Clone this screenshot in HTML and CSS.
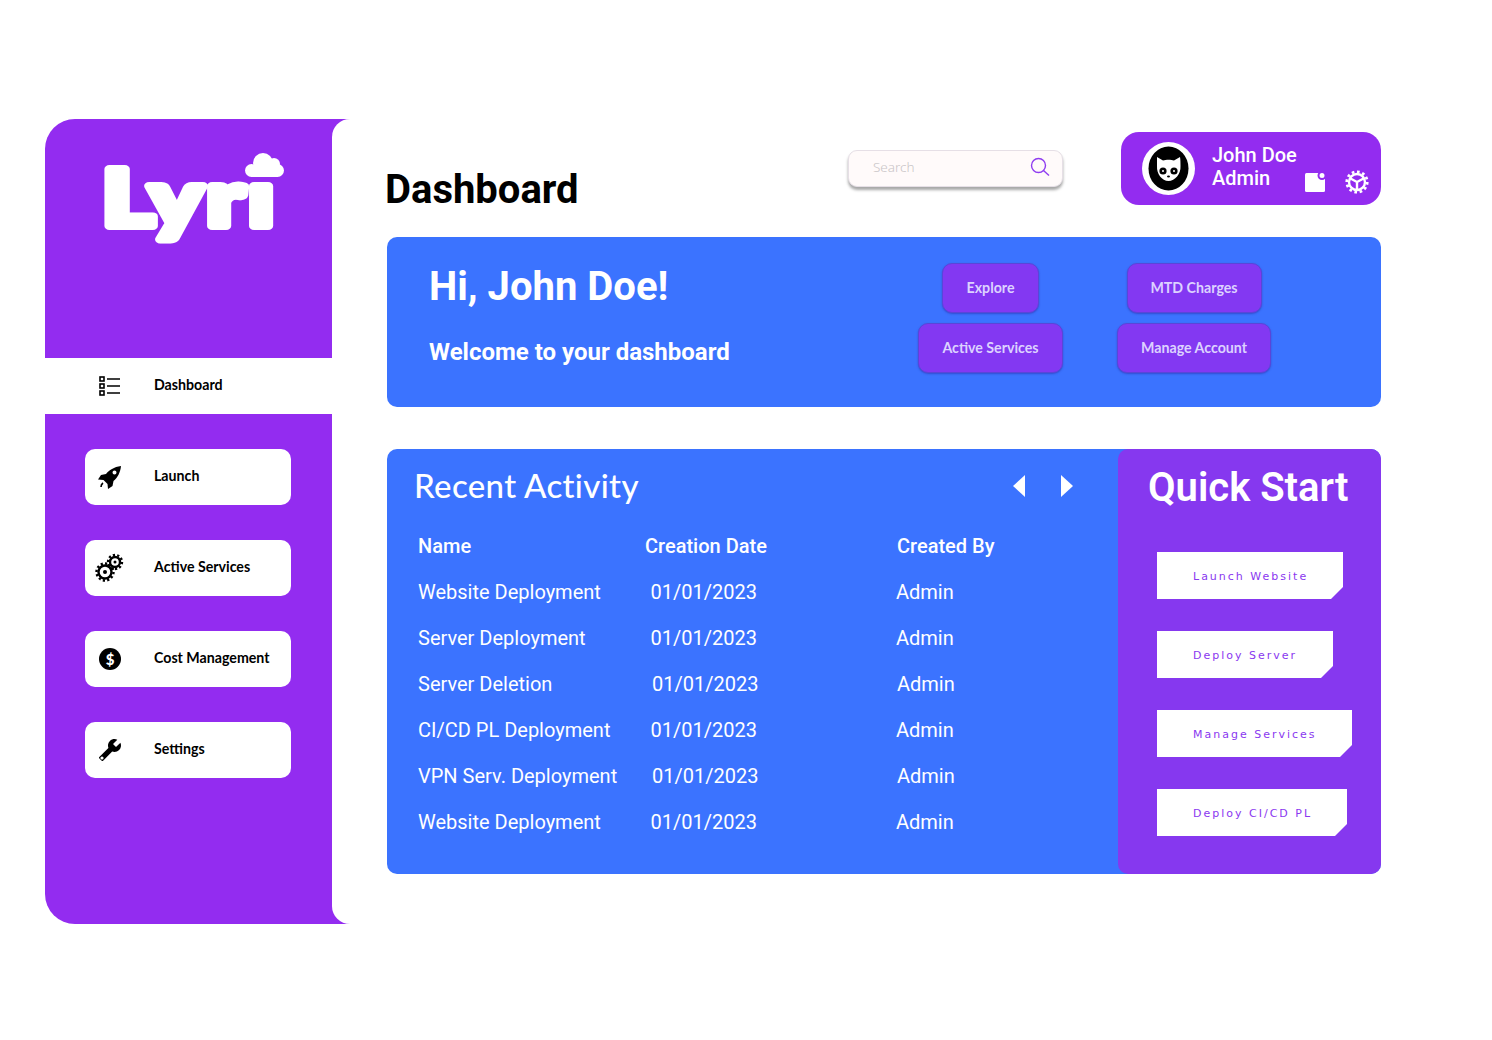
FILE: index.html
```html
<!DOCTYPE html>
<html lang="en">

<head>
    <meta charset="UTF-8">
    <meta name="viewport" content="width=device-width, initial-scale=1.0">
    <title>Lyri Dashboard</title>

    <link rel="stylesheet" href="styles.css">

</head>

<body>

    <div class="app">

        <!-- Barra lateral -->
        <aside class="sidebar">
            <div class="brand">
                <svg class="logo" width="190" height="95" viewBox="0 0 190 95">
                    <text class="logo-text" x="2" y="76" textLength="176" lengthAdjust="spacingAndGlyphs">Lyrı</text>
                    <circle class="logo-cloud" cx="151.500" cy="20.500" r="6.500"/>
                    <circle class="logo-cloud" cx="163" cy="13" r="10"/>
                    <circle class="logo-cloud" cx="174" cy="14" r="6"/>
                    <circle class="logo-cloud" cx="177.500" cy="20.500" r="6.500"/>
                    <rect class="logo-cloud" x="151" y="16" width="27" height="11"/>
                </svg>
            </div>

            <a class="nav-current">
                <span class="nav-icon">
                    <svg width="22" height="20" viewBox="0 0 22 20">
                        <rect class="icon-line" x="1" y="1" width="4" height="4"/>
                        <rect class="icon-line" x="1" y="8" width="4" height="4"/>
                        <rect class="icon-line" x="1" y="15" width="4" height="4"/>
                        <path class="icon-line" d="M8 3h13M8 10h13M8 17h13"/>
                    </svg>
                </span>
                <span class="nav-label">Dashboard</span>
            </a>

            <nav class="nav-list">
                <a class="nav-item">
                    <span class="nav-icon">
                        <svg width="24" height="24" viewBox="0 0 24 24">
                            <path fill-rule="evenodd" d="M23 1C16 2 11 5 8 9L3 10 0 14.500 5.500 15 9.500 19 10 24 14.500 21 15.500 16C19.500 13 22.500 7 23 1ZM16.500 5.500a2 2 0 1 0 0 4 2 2 0 1 0 0-4Z"/>
                            <path class="icon-line" d="M5 18c-1.500 1-2 2.500-2 4"/>
                        </svg>
                    </span>
                    <span class="nav-label">Launch</span>
                </a>
                <a class="nav-item">
                    <span class="nav-icon">
                        <svg width="30" height="30" viewBox="0 0 30 30">
                            <circle class="gear-ring" cx="10" cy="19" r="6.500"/>
                            <circle class="gear-teeth" cx="10" cy="19" r="8.500" pathLength="24" stroke-dasharray="1 1"/>
                            <circle cx="10" cy="19" r="2"/>
                            <circle class="gear-ring" cx="20" cy="9" r="5"/>
                            <circle class="gear-teeth" cx="20" cy="9" r="7" pathLength="20" stroke-dasharray="1 1"/>
                            <circle cx="20" cy="9" r="1.500"/>
                        </svg>
                    </span>
                    <span class="nav-label">Active Services</span>
                </a>
                <a class="nav-item">
                    <span class="nav-icon">
                        <svg width="22" height="22" viewBox="0 0 22 22">
                            <circle cx="11" cy="11" r="11"/>
                            <text class="dollar" x="11" y="16.500">$</text>
                        </svg>
                    </span>
                    <span class="nav-label">Cost Management</span>
                </a>
                <a class="nav-item">
                    <span class="nav-icon">
                        <svg class="wrench" width="24" height="24" viewBox="0 0 24 24">
                            <path d="M22.700 19l-9.100-9.100c.9-2.300.4-5-1.500-6.900-2-2-5-2.400-7.400-1.300L9 6 6 9 1.600 4.700C.4 7.100.9 10.100 2.900 12.100c1.900 1.900 4.600 2.400 6.900 1.500l9.100 9.100c.4.4 1 .4 1.400 0l2.300-2.300c.5-.4.5-1.100.1-1.400z"/>
                            <circle class="wrench-hole" cx="20" cy="20" r="1.600"/>
                        </svg>
                    </span>
                    <span class="nav-label">Settings</span>
                </a>
            </nav>
        </aside>

        <main class="main">

            <header class="topbar">
                <h1 class="page-title">Dashboard</h1>

                <div class="search">
                    <input class="search-input" type="text" placeholder="Search">
                    <svg width="20" height="20" viewBox="0 0 20 20">
                        <circle class="search-glass" cx="8.500" cy="8.500" r="7"/>
                        <path class="search-glass" d="M13.500 13.500l5.500 5"/>
                    </svg>
                </div>

                <div class="profile">
                    <div class="avatar">
                        <svg width="53" height="53" viewBox="0 0 53 53">
                            <circle class="cat-white" cx="26.500" cy="26.500" r="26.500"/>
                            <ellipse cx="26.500" cy="26.500" rx="20" ry="22"/>
                            <path class="cat-white" d="M15 15l6 3.500c3-1 8-1 11 0l6-3.500c.5 2.500.5 6 .5 9 .5 8-5.500 15-12 15S14.500 32 15 24c0-3 0-6.500 0-9z"/>
                            <circle cx="21" cy="29" r="3.600"/>
                            <circle cx="32" cy="29" r="3.600"/>
                            <circle class="cat-white" cx="21" cy="29" r="1"/>
                            <circle class="cat-white" cx="32" cy="29" r="1"/>
                            <ellipse cx="26.500" cy="34.500" rx="1.500" ry="1"/>
                        </svg>
                    </div>
                    <div class="profile-name">
                        John Doe<br>
                        Admin
                    </div>
                    <div class="profile-icons">
                        <svg class="profile-note" width="22" height="20" viewBox="0 0 22 20">
                            <rect class="profile-fill" x="0" y="1" width="20" height="19" rx="1.500"/>
                            <circle class="profile-dot" cx="17" cy="3.500" r="3.500"/>
                        </svg>
                        <svg width="24" height="24" viewBox="0 0 24 24">
                            <circle class="profile-ring" cx="12" cy="12" r="8"/>
                            <circle class="profile-teeth" cx="12" cy="12" r="10.200" pathLength="24" stroke-dasharray="1 1"/>
                            <path class="profile-spoke" d="M12 12V19M12 12L5.500 8.500M12 12L18.500 8.500"/>
                        </svg>
                    </div>
                </div>
            </header>

            <section class="hero">
                <div class="hero-text">
                    <h2 class="hero-title">Hi, John Doe!</h2>
                    <p class="hero-sub">Welcome to your dashboard</p>
                </div>
                <div class="hero-actions">
                    <button class="hero-btn btn-explore">Explore</button>
                    <button class="hero-btn btn-charges">MTD Charges</button>
                    <button class="hero-btn">Active Services</button>
                    <button class="hero-btn">Manage Account</button>
                </div>
            </section>

            <section class="activity">
                <div class="recent">
                    <div class="recent-head">
                        <h2 class="recent-title">Recent Activity</h2>
                        <div class="pager">
                            <span class="arrow arrow-left"></span>
                            <span class="arrow arrow-right"></span>
                        </div>
                    </div>

                    <table class="recent-table">
                        <tr>
                            <th>Name</th>
                            <th>Creation Date</th>
                            <th>Created By</th>
                        </tr>
                        <tr>
                            <td>Website Deployment</td>
                            <td>01/01/2023</td>
                            <td>Admin</td>
                        </tr>
                        <tr>
                            <td>Server Deployment</td>
                            <td>01/01/2023</td>
                            <td>Admin</td>
                        </tr>
                        <tr class="shifted">
                            <td>Server Deletion</td>
                            <td>01/01/2023</td>
                            <td>Admin</td>
                        </tr>
                        <tr>
                            <td>CI/CD PL Deployment</td>
                            <td>01/01/2023</td>
                            <td>Admin</td>
                        </tr>
                        <tr class="shifted">
                            <td>VPN Serv. Deployment</td>
                            <td>01/01/2023</td>
                            <td>Admin</td>
                        </tr>
                        <tr>
                            <td>Website Deployment</td>
                            <td>01/01/2023</td>
                            <td>Admin</td>
                        </tr>
                    </table>
                </div>

                <div class="quick">
                    <h2 class="quick-title">Quick Start</h2>
                    <a class="quick-btn">Launch Website</a>
                    <a class="quick-btn">Deploy Server</a>
                    <a class="quick-btn">Manage Services</a>
                    <a class="quick-btn">Deploy CI/CD PL</a>
                </div>
            </section>

        </main>
    </div>
</body>

</html>
```

FILE: styles.css
```css
body {
    margin: 0;
    background-color: white;
    font-family: "Roboto", sans-serif;
}

h1,
h2,
p {
    margin: 0;
}

.app {
    display: flex;
    height: 805px;
    margin: 119px 0 0 45px;
}

/* --- Barra lateral --- */

.sidebar {
    flex: none;
    width: 305px;
    background-color: #932cf0;
    border-radius: 30px 0 0 30px;
}

.brand {
    height: 239px;
    box-sizing: border-box;
    padding: 31px 0 0 55px;
}

.logo {
    display: block;
    overflow: visible;
}

.logo-text {
    font-family: "Lato", sans-serif;
    font-size: 78px;
    font-weight: 900;
    letter-spacing: 3px;
    fill: white;
    stroke: white;
    stroke-width: 8px;
    stroke-linejoin: round;
}

.logo-cloud {
    fill: white;
}

.nav-current,
.nav-item {
    display: flex;
    align-items: center;
    gap: 32px;
    height: 56px;
    font-family: "Lato", sans-serif;
    font-size: 14.2px;
    font-weight: 700;
    color: black;
}

.nav-label {
    margin-bottom: 4px;
}

.nav-current {
    width: 287px;
    box-sizing: border-box;
    padding-left: 53px;
    background-color: white;
}

.nav-list {
    display: flex;
    flex-direction: column;
    gap: 35px;
    padding: 35px 0 0 40px;
}

.nav-item {
    width: 206px;
    box-sizing: border-box;
    padding-left: 13px;
    background-color: white;
    border-radius: 10px;
}

.nav-icon {
    display: flex;
    flex: none;
    justify-content: center;
    width: 24px;
}

.nav-icon svg {
    flex: none;
}

.icon-line {
    fill: none;
    stroke: black;
    stroke-width: 1.6px;
}

.gear-ring {
    fill: none;
    stroke: black;
    stroke-width: 2.4px;
}

.gear-teeth {
    fill: none;
    stroke: black;
    stroke-width: 2.4px;
}

.dollar {
    font-family: "Lato", sans-serif;
    font-size: 15px;
    font-weight: 900;
    text-anchor: middle;
    fill: white;
}

.wrench {
    transform: scaleX(-1);
}

.wrench-hole {
    fill: white;
}

/* --- Contenido --- */

.main {
    flex: none;
    width: 994px;
    margin-left: -18px;
    padding: 13px 0 0 55px;
    background-color: white;
    border-radius: 18px 0 0 18px;
}

.topbar {
    display: flex;
    align-items: flex-start;
    height: 73px;
    margin-bottom: 32px;
}

.page-title {
    flex: 1;
    margin: 34px 0 0 -2px;
    font-size: 40px;
    line-height: 48px;
    font-weight: 700;
}

.search {
    display: flex;
    align-items: center;
    width: 215px;
    height: 37px;
    box-sizing: border-box;
    margin: 18px 58px 0 0;
    padding: 0 12px 0 24px;
    background-color: #fffafa;
    border: 1px solid #e6dfe6;
    border-radius: 9px;
    box-shadow: 0 3px 3px rgba(0, 0, 0, 0.35);
}

.search-input {
    flex: 1;
    min-width: 0;
    padding: 0 0 4px;
    border: none;
    outline: none;
    background: transparent;
    font-family: "Noto Sans", sans-serif;
    font-size: 13.5px;
    font-weight: 300;
}

.search-input::placeholder {
    color: #c9c5c7;
}

.search svg {
    margin-bottom: 3px;
}

.search-glass {
    fill: none;
    stroke: #8f3cf0;
    stroke-width: 1.4px;
}

.profile {
    display: flex;
    align-items: center;
    flex: none;
    width: 260px;
    height: 73px;
    box-sizing: border-box;
    padding-left: 21px;
    background-color: #932cf0;
    border-radius: 18px;
    color: white;
}

.avatar {
    flex: none;
    height: 53px;
    margin-right: 17px;
}

.cat-white {
    fill: white;
}

.profile-name {
    flex: 1;
    margin-bottom: 4px;
    font-size: 20px;
    line-height: 23px;
    font-weight: 500;
}

.profile-icons {
    display: flex;
    align-items: flex-end;
    gap: 18px;
    align-self: flex-end;
    padding: 0 12px 11px 0;
}

.profile-note {
    margin-bottom: 2px;
}

.profile-fill {
    fill: white;
}

.profile-dot {
    fill: white;
    stroke: #932cf0;
    stroke-width: 2px;
}

.profile-ring,
.profile-spoke {
    fill: none;
    stroke: white;
    stroke-width: 2.400px;
}

.profile-teeth {
    fill: none;
    stroke: white;
    stroke-width: 2.800px;
}

.hero {
    display: flex;
    justify-content: space-between;
    height: 170px;
    box-sizing: border-box;
    margin-bottom: 42px;
    padding: 26px 110px 0 42px;
    background-color: #3b73ff;
    border-radius: 10px;
    color: white;
}

.hero-title {
    font-size: 40px;
    line-height: 48px;
    font-weight: 700;
}

.hero-sub {
    margin-top: 26px;
    font-size: 24px;
    line-height: 30px;
    font-weight: 700;
}

.hero-actions {
    display: grid;
    grid-template-columns: 145px 154px;
    grid-auto-rows: 50px;
    justify-items: center;
    column-gap: 54px;
    row-gap: 10px;
    align-content: start;
}

.hero-btn {
    width: 100%;
    padding: 0 0 2px;
    background-color: #8338f2;
    border: 1px solid #5a45d8;
    border-radius: 10px;
    box-shadow: 0 1px 2px rgba(40, 40, 160, 0.5);
    font-family: "Lato", sans-serif;
    font-size: 14.2px;
    font-weight: 700;
    color: #dcd2ff;
}

.btn-explore {
    width: 97px;
}

.btn-charges {
    width: 135px;
}

.activity {
    display: flex;
    height: 425px;
    background-color: #3b73ff;
    border-radius: 10px;
    color: white;
}

.recent {
    flex: 1;
    padding-left: 27px;
}

.recent-head {
    display: flex;
    align-items: center;
    height: 74px;
    padding-right: 45px;
}

.recent-title {
    flex: 1;
    margin-bottom: 2px;
    font-family: "Lato", sans-serif;
    font-size: 33px;
    font-weight: 500;
    letter-spacing: 0.35px;
}

.pager {
    display: flex;
    gap: 36px;
}

.arrow {
    width: 12px;
    height: 22px;
    background-color: white;
}

.arrow-left {
    clip-path: polygon(100% 0, 100% 100%, 0 50%);
}

.arrow-right {
    clip-path: polygon(0 0, 100% 50%, 0 100%);
}

.recent-table {
    margin-left: 4px;
    border-collapse: collapse;
    table-layout: fixed;
    width: 660px;
    font-size: 20px;
}

.recent-table tr {
    height: 46px;
}

.recent-table th {
    padding: 0;
    font-weight: 500;
    text-align: left;
}

.recent-table td {
    padding: 0;
}

.recent-table th:nth-child(1) {
    width: 227px;
}

.recent-table th:nth-child(2) {
    width: 251px;
}

.recent-table th:nth-child(3) {
    padding-left: 1px;
}

.recent-table td:nth-child(2) {
    padding-left: 5.5px;
}

.shifted td:nth-child(2) {
    padding-left: 7px;
}

.shifted td:nth-child(3) {
    padding-left: 1px;
}

.quick {
    display: flex;
    flex: none;
    flex-direction: column;
    align-items: flex-start;
    gap: 32px;
    width: 263px;
    box-sizing: border-box;
    padding-left: 39px;
    background-color: #8638ef;
    border-radius: 10px;
}

.quick-title {
    align-self: stretch;
    height: 57px;
    margin: 15px 0 -1px -9px;
    font-size: 40px;
    line-height: 48px;
    font-weight: 600;
    white-space: nowrap;
}

.quick-btn {
    width: 114px;
    height: 47px;
    padding: 0 36px;
    background-color: white;
    clip-path: polygon(0 0, 100% 0, 100% 35px, calc(100% - 12px) 100%, 0 100%);
    font-family: "DejaVu Sans", sans-serif;
    font-size: 11px;
    line-height: 50px;
    letter-spacing: 2px;
    white-space: nowrap;
    color: #8a38f0;
}

.quick-btn:nth-of-type(2) {
    width: 104px;
}

.quick-btn:nth-of-type(3) {
    width: 123px;
}

.quick-btn:nth-of-type(4) {
    width: 118px;
}
```
